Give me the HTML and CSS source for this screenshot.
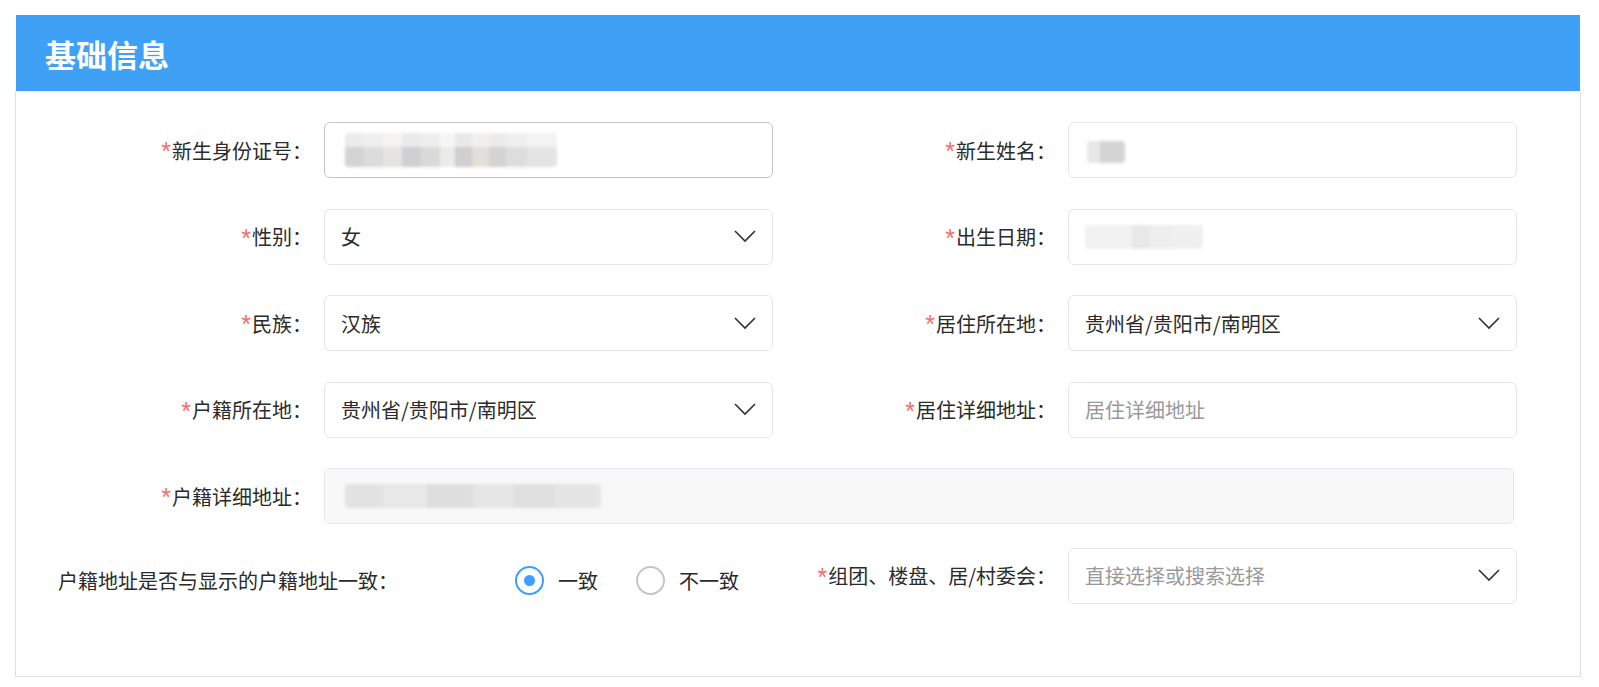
FILE: index.html
```html
<!DOCTYPE html>
<html lang="zh-CN">
<head>
<meta charset="utf-8">
<title>基础信息</title>
<link rel="stylesheet" href="styles.css">
</head>
<body>
<div class="panel">
  <div class="panel-header"><h2 class="panel-title">基础信息</h2></div>
  <div class="panel-body">
    <div class="form-grid">
      <div class="label"><span class="req">*</span>新生身份证号：</div>
      <div class="control control-active"><span class="blur blur-id"></span></div>
      <div class="label"><span class="req">*</span>新生姓名：</div>
      <div class="control"><span class="blur blur-name"></span></div>

      <div class="label"><span class="req">*</span>性别：</div>
      <div class="control select"><span class="value">女</span><svg class="chevron" viewBox="0 0 22 13"><polyline points="1,1 11,11 21,1"/></svg></div>
      <div class="label"><span class="req">*</span>出生日期：</div>
      <div class="control"><span class="blur blur-date"></span></div>

      <div class="label"><span class="req">*</span>民族：</div>
      <div class="control select"><span class="value">汉族</span><svg class="chevron" viewBox="0 0 22 13"><polyline points="1,1 11,11 21,1"/></svg></div>
      <div class="label"><span class="req">*</span>居住所在地：</div>
      <div class="control select"><span class="value">贵州省/贵阳市/南明区</span><svg class="chevron" viewBox="0 0 22 13"><polyline points="1,1 11,11 21,1"/></svg></div>

      <div class="label"><span class="req">*</span>户籍所在地：</div>
      <div class="control select"><span class="value">贵州省/贵阳市/南明区</span><svg class="chevron" viewBox="0 0 22 13"><polyline points="1,1 11,11 21,1"/></svg></div>
      <div class="label"><span class="req">*</span>居住详细地址：</div>
      <div class="control"><span class="placeholder">居住详细地址</span></div>

      <div class="label"><span class="req">*</span>户籍详细地址：</div>
      <div class="control control-wide control-disabled"><span class="blur blur-addr"></span></div>

      <div class="consistency">
        <div class="consistency-label">户籍地址是否与显示的户籍地址一致：</div>
        <div class="radio-group">
          <span class="radio radio-checked"><span class="radio-dot"></span></span><span class="radio-text">一致</span>
          <span class="radio"></span><span class="radio-text">不一致</span>
        </div>
      </div>
      <div class="label last-row"><span class="req">*</span>组团、楼盘、居/村委会：</div>
      <div class="control select last-row"><span class="placeholder">直接选择或搜索选择</span><svg class="chevron" viewBox="0 0 22 13"><polyline points="1,1 11,11 21,1"/></svg></div>
    </div>
  </div>
</div>
</body>
</html>
```

FILE: styles.css
```css
* { box-sizing: border-box; }

html, body {
  margin: 0;
  padding: 0;
  background: #ffffff;
}

body {
  font-family: "Noto Sans CJK SC", "Noto Sans", sans-serif;
  color: #333333;
  padding: 15px 18px 0 15px;
}

.panel {
  width: 1566px;
}

.panel-header {
  height: 76px;
  margin: 0 1px;
  background: #3fa1f6;
  display: flex;
  align-items: center;
  padding-left: 29px;
}

.panel-title {
  margin: 0;
  font-size: 31px;
  font-weight: 700;
  color: #ffffff;
  line-height: 1;
}

.panel-body {
  border: 1px solid #dcdfe6;
  border-top: none;
  height: 586px;
  padding-top: 31px;
}

.form-grid {
  display: grid;
  grid-template-columns: 308px 449px 295px 449px;
  grid-auto-rows: 56px;
  row-gap: 30.5px;
}

.label {
  display: flex;
  align-items: center;
  justify-content: flex-end;
  padding-right: 12px;
  font-size: 20px;
  color: #2b2b2b;
  white-space: nowrap;
}

.req {
  font-family: "Liberation Sans", sans-serif;
  font-size: 25px;
  line-height: 20px;
  height: 20px;
  color: #f56c6c;
  margin-right: 1px;
  position: relative;
  top: 1px;
}

.control {
  position: relative;
  display: flex;
  align-items: center;
  border: 1px solid #e4e7ed;
  border-radius: 6px;
  background: #ffffff;
  padding: 0 16px;
  font-size: 20px;
  color: #2b2b2b;
}

.control-active {
  border-color: #c0c4cc;
}

.control-wide {
  grid-column: 2 / span 3;
  width: 1190px;
}

.control-disabled {
  background: #f8f8f9;
}

.select {
  justify-content: space-between;
}

.chevron {
  width: 22px;
  height: 13px;
  fill: none;
  stroke: #333333;
  stroke-width: 1.6;
}

.placeholder {
  color: #999999;
}

.blur {
  display: block;
  filter: blur(1.5px);
  border-radius: 4px;
}

.blur-id {
  width: 212px;
  height: 34px;
  margin-left: 4px;
  background:
    linear-gradient(180deg, rgba(255,255,255,0.55) 0 40%, rgba(255,255,255,0) 40% 100%),
    linear-gradient(90deg, #d4d4d4 0 9%, #dcdcdc 9% 18%, #e6e4e2 18% 27%, #d0d0d2 27% 36%, #dadada 36% 45%, #ecebea 45% 52%, #cfcfcf 52% 60%, #e2ded9 60% 68%, #d3d3d3 68% 76%, #dddddd 76% 86%, #e4e4e4 86% 100%);
}

.blur-name {
  width: 38px;
  height: 22px;
  margin-left: 2px;
  margin-top: 4px;
  background: linear-gradient(90deg, #e8e8e8 0 35%, #d4d4d4 35% 100%);
}

.blur-date {
  width: 118px;
  height: 24px;
  background: linear-gradient(90deg, #f2f2f2 0 40%, #e8e8e8 40% 55%, #eeeeee 55% 75%, #f0f0f0 75% 100%);
}

.blur-addr {
  width: 256px;
  height: 24px;
  margin-left: 4px;
  background: linear-gradient(90deg, #e2e2e2 0 15%, #e8e8e8 15% 32%, #dedede 32% 50%, #e6e6e6 50% 66%, #e0e0e0 66% 82%, #e5e5e5 82% 100%);
}

.consistency {
  grid-column: 1 / span 2;
  display: flex;
  align-items: center;
  padding-left: 42px;
  padding-top: 10px;
  margin-top: -7px;
  height: 56px;
  font-size: 20px;
  color: #2b2b2b;
  white-space: nowrap;
}

.consistency-label {
  width: 457px;
  flex-shrink: 0;
  white-space: nowrap;
}

.radio-group {
  display: flex;
  align-items: center;
  flex-shrink: 0;
}

.radio {
  width: 29px;
  height: 29px;
  flex-shrink: 0;
  border-radius: 50%;
  border: 2px solid #c6c6c6;
  display: flex;
  align-items: center;
  justify-content: center;
}

.radio-checked {
  border-color: #409eff;
}

.radio-dot {
  width: 11px;
  height: 11px;
  border-radius: 50%;
  background: #409eff;
}

.radio-text {
  flex-shrink: 0;
  white-space: nowrap;
  margin-left: 14px;
  margin-right: 38px;
}

.last-row {
  margin-top: -7px;
  height: 56px;
}
```
